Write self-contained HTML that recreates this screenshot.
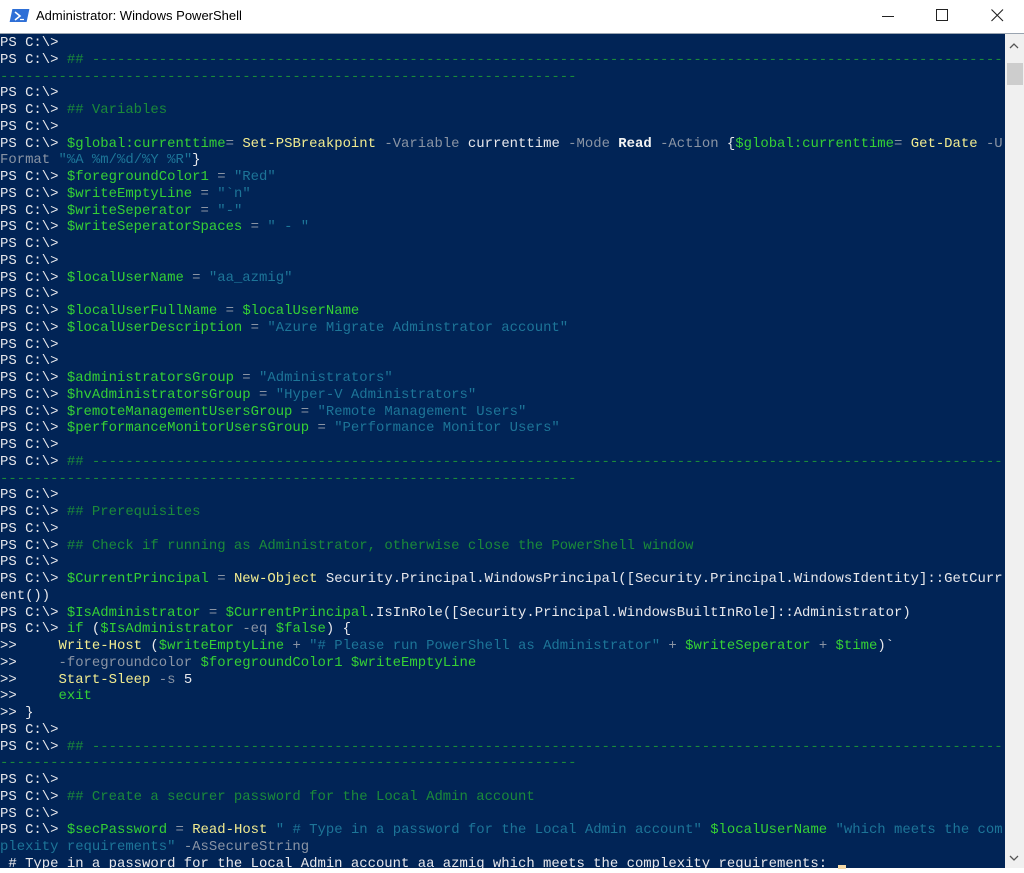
<!DOCTYPE html>
<html><head><meta charset="utf-8"><style>
html,body{margin:0;padding:0;width:1024px;height:873px;overflow:hidden;background:#fff;}
.title{position:absolute;left:0;top:0;width:1024px;height:33px;background:#fff;border-bottom:1px solid #9aa4b0;}
.title .t{position:absolute;left:36px;top:8px;font:13px "Liberation Sans",sans-serif;color:#000;}
.icon{position:absolute;left:11px;top:9px;width:17px;height:13px;background:#2e6fd6;transform:skewX(-12deg);}
.ctl{position:absolute;top:8px;}
.con{position:absolute;left:0;top:34px;width:1005px;height:834px;background:#012456;overflow:hidden;}
pre{margin:0;padding:1px 0 0 0;font-family:"Liberation Mono",monospace;font-size:13.93px;line-height:16.75px;color:#e8e8ec;white-space:pre;}
.c{color:#1b8a3a}.s{color:#1d7598}.v{color:#35d035}.k{color:#f2ec90}.g{color:#8a94a4}.w{color:#f2f2f2;font-weight:bold}
.sb{position:absolute;left:1005px;top:34px;width:19px;height:834px;background:#f0f0f0;}
.thumb{position:absolute;left:1007px;top:63px;width:16px;height:22px;background:#cdcdcd;}
.cur{position:absolute;left:838px;top:865px;width:8px;height:4px;background:#f3d9a8;}
</style></head><body>
<div class="title">
<div class="icon"></div>
<svg style="position:absolute;left:13px;top:11px" width="12" height="10"><path d="M2 1 L7 5 L2 9" stroke="#fff" stroke-width="1.6" fill="none"/><path d="M7 8.5 H11" stroke="#fff" stroke-width="1.2"/></svg>
<div class="t">Administrator: Windows PowerShell</div>
<svg class="ctl" style="left:880px" width="16" height="16"><path d="M2 8.5 H14" stroke="#222" stroke-width="1"/></svg>
<svg class="ctl" style="left:935px" width="16" height="16"><rect x="1.5" y="1.5" width="11" height="11" fill="none" stroke="#222" stroke-width="1"/></svg>
<svg class="ctl" style="left:990px" width="16" height="16"><path d="M1.5 1.5 L13 13 M13 1.5 L1.5 13" stroke="#222" stroke-width="1.1"/></svg>
</div>
<div class="con"><pre>PS C:\&gt;
PS C:\&gt; <span class="c">## -------------------------------------------------------------------------------------------------------------</span>
<span class="c">---------------------------------------------------------------------</span>
PS C:\&gt;
PS C:\&gt; <span class="c">## Variables</span>
PS C:\&gt;
PS C:\&gt; <span class="v">$global:currenttime</span><span class="g">=</span> <span class="k">Set-PSBreakpoint</span> <span class="g">-Variable</span> currenttime <span class="g">-Mode</span> <span class="w">Read</span> <span class="g">-Action</span> {<span class="v">$global:currenttime</span><span class="g">=</span> <span class="k">Get-Date</span> <span class="g">-U</span>
<span class="g">Format</span> <span class="s">"%A %m/%d/%Y %R"</span>}
PS C:\&gt; <span class="v">$foregroundColor1</span> <span class="g">=</span> <span class="s">"Red"</span>
PS C:\&gt; <span class="v">$writeEmptyLine</span> <span class="g">=</span> <span class="s">"`n"</span>
PS C:\&gt; <span class="v">$writeSeperator</span> <span class="g">=</span> <span class="s">"-"</span>
PS C:\&gt; <span class="v">$writeSeperatorSpaces</span> <span class="g">=</span> <span class="s">" - "</span>
PS C:\&gt;
PS C:\&gt;
PS C:\&gt; <span class="v">$localUserName</span> <span class="g">=</span> <span class="s">"aa_azmig"</span>
PS C:\&gt;
PS C:\&gt; <span class="v">$localUserFullName</span> <span class="g">=</span> <span class="v">$localUserName</span>
PS C:\&gt; <span class="v">$localUserDescription</span> <span class="g">=</span> <span class="s">"Azure Migrate Adminstrator account"</span>
PS C:\&gt;
PS C:\&gt;
PS C:\&gt; <span class="v">$administratorsGroup</span> <span class="g">=</span> <span class="s">"Administrators"</span>
PS C:\&gt; <span class="v">$hvAdministratorsGroup</span> <span class="g">=</span> <span class="s">"Hyper-V Administrators"</span>
PS C:\&gt; <span class="v">$remoteManagementUsersGroup</span> <span class="g">=</span> <span class="s">"Remote Management Users"</span>
PS C:\&gt; <span class="v">$performanceMonitorUsersGroup</span> <span class="g">=</span> <span class="s">"Performance Monitor Users"</span>
PS C:\&gt;
PS C:\&gt; <span class="c">## -------------------------------------------------------------------------------------------------------------</span>
<span class="c">---------------------------------------------------------------------</span>
PS C:\&gt;
PS C:\&gt; <span class="c">## Prerequisites</span>
PS C:\&gt;
PS C:\&gt; <span class="c">## Check if running as Administrator, otherwise close the PowerShell window</span>
PS C:\&gt;
PS C:\&gt; <span class="v">$CurrentPrincipal</span> <span class="g">=</span> <span class="k">New-Object</span> Security.Principal.WindowsPrincipal([Security.Principal.WindowsIdentity]::GetCurr
ent())
PS C:\&gt; <span class="v">$IsAdministrator</span> <span class="g">=</span> <span class="v">$CurrentPrincipal</span>.IsInRole([Security.Principal.WindowsBuiltInRole]::Administrator)
PS C:\&gt; <span class="v">if</span> (<span class="v">$IsAdministrator</span> <span class="g">-eq</span> <span class="v">$false</span>) {
&gt;&gt;     <span class="k">Write-Host</span> (<span class="v">$writeEmptyLine</span> <span class="g">+</span> <span class="s">"# Please run PowerShell as Administrator"</span> <span class="g">+</span> <span class="v">$writeSeperator</span> <span class="g">+</span> <span class="v">$time</span>)`
&gt;&gt;     <span class="g">-foregroundcolor</span> <span class="v">$foregroundColor1</span> <span class="v">$writeEmptyLine</span>
&gt;&gt;     <span class="k">Start-Sleep</span> <span class="g">-s</span> 5
&gt;&gt;     <span class="v">exit</span>
&gt;&gt; }
PS C:\&gt;
PS C:\&gt; <span class="c">## -------------------------------------------------------------------------------------------------------------</span>
<span class="c">---------------------------------------------------------------------</span>
PS C:\&gt;
PS C:\&gt; <span class="c">## Create a securer password for the Local Admin account</span>
PS C:\&gt;
PS C:\&gt; <span class="v">$secPassword</span> <span class="g">=</span> <span class="k">Read-Host</span> <span class="s">" # Type in a password for the Local Admin account"</span> <span class="v">$localUserName</span> <span class="s">"which meets the com</span>
<span class="s">plexity requirements"</span> <span class="g">-AsSecureString</span>
 # Type in a password for the Local Admin account aa_azmig which meets the complexity requirements: </pre></div>
<div class="cur"></div>
<div class="sb"></div>
<div class="thumb"></div>
<svg style="position:absolute;left:1009px;top:42px" width="10" height="8"><path d="M1 6 L5 2 L9 6" stroke="#555" stroke-width="1.3" fill="none"/></svg>
<svg style="position:absolute;left:1009px;top:854px" width="10" height="8"><path d="M1 2 L5 6 L9 2" stroke="#555" stroke-width="1.3" fill="none"/></svg>
</body></html>
